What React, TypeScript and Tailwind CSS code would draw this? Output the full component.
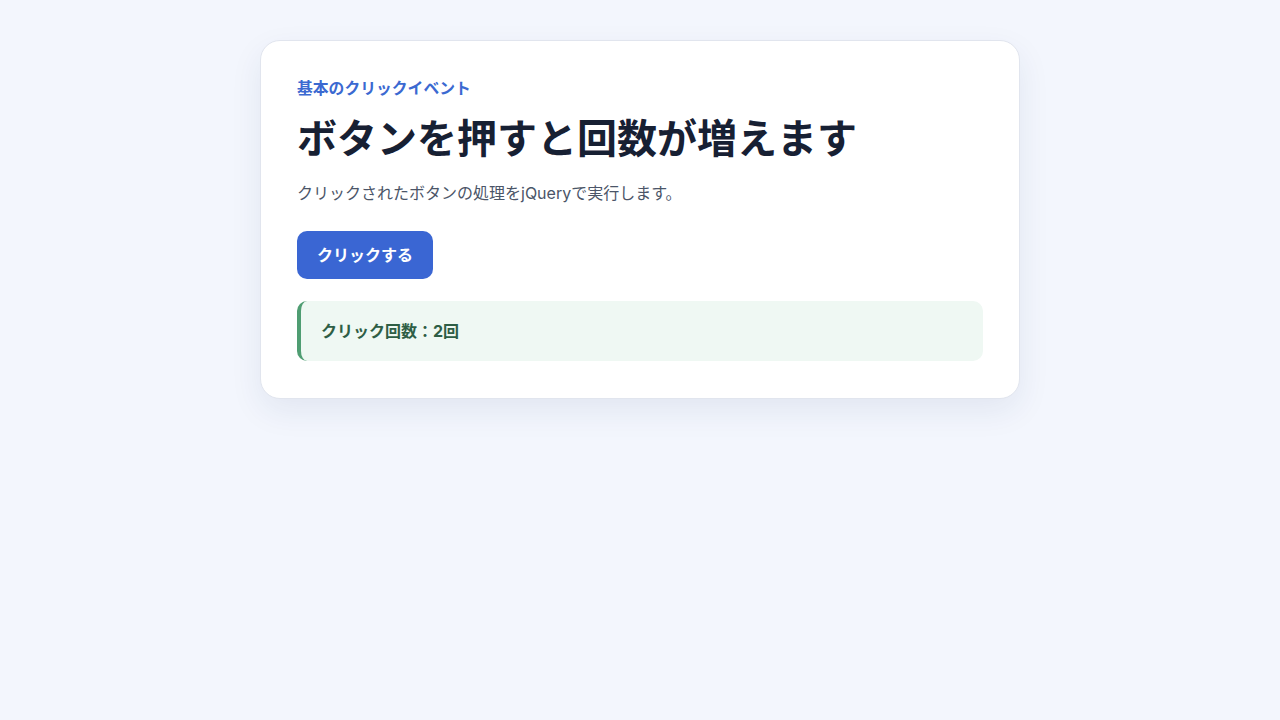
import React, { useState } from "react";

export default function App() {
  const [count, setCount] = useState(2);
  return (
    <div
      className="min-h-[720px] w-full bg-[#f3f6fd] pt-10"
      style={{ fontFamily: 'Inter, "Noto Sans CJK JP", sans-serif' }}
    >
      <div className="mx-auto w-[760px] rounded-[20px] border border-[#e1e5ee] bg-white px-9 pt-9 pb-[37px] shadow-[0_12px_32px_rgba(30,50,100,0.08)]">
        <div className="text-[15.8px] font-bold leading-6 text-[#3b69d1]">基本のクリックイベント</div>
        <h1 className="mt-3 text-[40px] font-bold leading-[52px] text-[#172033]">ボタンを押すと回数が増えます</h1>
        <p className="mt-[14px] text-[16px] leading-[28px] text-[#4b5568]">クリックされたボタンの処理をjQueryで実行します。</p>
        <button
          onClick={() => setCount(count + 1)}
          className="mt-6 rounded-[10px] bg-[#3a66d3] px-5 py-3 text-[16px] font-bold leading-6 text-white"
        >
          クリックする
        </button>
        <div className="mt-[22px] rounded-[10px] border-l-4 border-[#4f9d72] bg-[#eff8f3] py-[18px] pl-5 pr-5 text-[16px] font-bold leading-6 text-[#2e5e45]">
          クリック回数：{count}回
        </div>
      </div>
    </div>
  );
}
